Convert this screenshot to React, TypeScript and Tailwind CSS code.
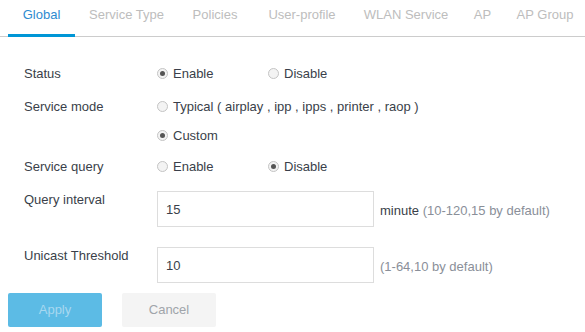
import { useState } from 'react';

const tabs = [
  { name: 'Global', w: 'w-[67px]' },
  { name: 'Service Type', w: 'w-[103px]' },
  { name: 'Policies', w: 'w-[74px]' },
  { name: 'User-profile', w: 'w-[100px]' },
  { name: 'WLAN Service', w: 'w-[108px]' },
  { name: 'AP', w: 'w-[45px]' },
  { name: 'AP Group', w: 'w-[80px]' },
];

function Radio({ checked, label, onClick }: { checked: boolean; label: string; onClick?: () => void }) {
  return (
    <button type="button" onClick={onClick} className="flex items-center gap-[5px] text-[13px] text-[#3a3f4a]">
      <span className="w-[11px] h-[11px] rounded-full border border-[#c4c4c4] bg-[#f3f3f3] flex items-center justify-center">
        {checked && <span className="w-[5px] h-[5px] rounded-full bg-[#555]" />}
      </span>
      {label}
    </button>
  );
}

export default function App() {
  const [status, setStatus] = useState('enable');
  const [mode, setMode] = useState('custom');
  const [query, setQuery] = useState('disable');

  return (
    <div className="w-[585px] h-[332px] bg-white overflow-hidden" style={{ fontFamily: '"Liberation Sans", Arial, sans-serif' }}>
      <div className="flex pl-2 h-[37px] border-b border-[#cccccc]">
        {tabs.map((t, i) => (
          <div
            key={t.name}
            className={`${t.w} shrink-0 whitespace-nowrap text-center pt-[5px] text-[13px] ${i === 0 ? 'text-[#2e8bd0] border-b-[3px] border-[#0096d6] -mb-[1px]' : 'text-[#bdbdbd]'}`}
          >
            {t.name}
          </div>
        ))}
      </div>

      <div className="pl-6 pt-[28px] text-[13px] text-[#3a3f4a]">
        <div className="flex h-[17px] items-center">
          <div className="w-[133px]">Status</div>
          <div className="w-[111px]"><Radio checked={status === 'enable'} label="Enable" onClick={() => setStatus('enable')} /></div>
          <Radio checked={status === 'disable'} label="Disable" onClick={() => setStatus('disable')} />
        </div>
        <div className="flex h-[17px] items-center mt-[16px]">
          <div className="w-[133px]">Service mode</div>
          <Radio checked={mode === 'typical'} label="Typical ( airplay , ipp , ipps , printer , raop )" onClick={() => setMode('typical')} />
        </div>
        <div className="flex h-[17px] items-center mt-[12px] pl-[133px]">
          <Radio checked={mode === 'custom'} label="Custom" onClick={() => setMode('custom')} />
        </div>
        <div className="flex h-[17px] items-center mt-[14px]">
          <div className="w-[133px]">Service query</div>
          <div className="w-[111px]"><Radio checked={query === 'enable'} label="Enable" onClick={() => setQuery('enable')} /></div>
          <Radio checked={query === 'disable'} label="Disable" onClick={() => setQuery('disable')} />
        </div>

        <div className="flex mt-[16px]">
          <div className="w-[133px] leading-[17px]">Query interval</div>
          <input defaultValue="15" className="w-[217px] h-[36px] border border-[#dddddd] px-[8px] text-[13px] text-[#3a3f4a] outline-none" />
          <div className="ml-[6px] pt-[10px] text-[13px]">
            minute <span className="text-[#8a8f99]">(10-120,15 by default)</span>
          </div>
        </div>
        <div className="flex mt-[20px]">
          <div className="w-[133px] leading-[17px]">Unicast Threshold</div>
          <input defaultValue="10" className="w-[217px] h-[36px] border border-[#dddddd] px-[8px] text-[13px] text-[#3a3f4a] outline-none" />
          <div className="ml-[6px] pt-[10px] text-[13px] text-[#8a8f99]">(1-64,10 by default)</div>
        </div>
      </div>

      <div className="flex gap-[20px] pl-2 mt-[10px]">
        <button className="w-[94px] h-[34px] rounded-[2px] bg-[#5cbbe5] text-[13px] text-[#a8d8f0]">Apply</button>
        <button className="w-[94px] h-[34px] rounded-[2px] bg-[#f4f4f4] text-[13px] text-[#a0a4aa]">Cancel</button>
      </div>
    </div>
  );
}
